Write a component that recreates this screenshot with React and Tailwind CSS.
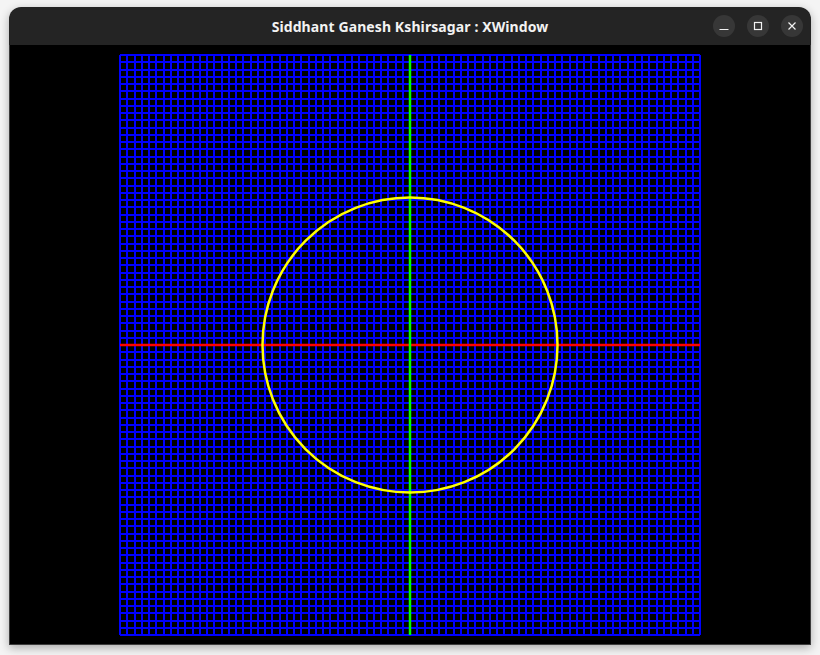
import React from "react";

const STEP = 7.25;
const lines = Array.from({ length: 81 }, (_, i) => 110 + i * STEP);

function TitleButton({ children }) {
  return (
    <div className="w-[22px] h-[22px] rounded-full bg-[#373737] flex items-center justify-center">
      <svg width="12" height="12" viewBox="0 0 12 12" fill="none" stroke="#f2f2f2" strokeWidth="1.2">
        {children}
      </svg>
    </div>
  );
}

export default function App() {
  return (
    <div className="w-[820px] h-[655px] bg-[#f4f4f4] pt-[7px] pl-[9px]">
      <div className="w-[802px] h-[638px] flex flex-col rounded-t-[12px] shadow-[0_3px_10px_rgba(0,0,0,0.3)] overflow-hidden">
        <div className="h-[38px] bg-[#242424] relative flex items-center justify-center">
          <span className="text-[14px] font-bold text-[#f2f2f2] font-['Noto_Sans',sans-serif] tracking-[0.1px]">
            Siddhant Ganesh Kshirsagar : XWindow
          </span>
          <div className="absolute right-[8px] top-[8px] flex gap-[12px]">
            <TitleButton>
              <line x1="1.5" y1="9.5" x2="10.5" y2="9.5" />
            </TitleButton>
            <TitleButton>
              <rect x="2.5" y="2.5" width="7" height="7" />
            </TitleButton>
            <TitleButton>
              <path d="M2.5 2.5 L9.5 9.5 M9.5 2.5 L2.5 9.5" />
            </TitleButton>
          </div>
        </div>
        <div className="h-[600px] bg-black border-x border-b border-[#3c3c3c]">
          <svg width="800" height="600" viewBox="0 0 800 600" className="block">
            <g stroke="#0000ff" strokeWidth="2" shapeRendering="crispEdges">
              {lines.map((p, i) => (
                <line key={"v" + i} x1={p} y1={10} x2={p} y2={590} />
              ))}
              {lines.map((p, i) => (
                <line key={"h" + i} x1={110} y1={10 + i * STEP} x2={690} y2={10 + i * STEP} />
              ))}
            </g>
            <line x1="110" y1="300" x2="690" y2="300" stroke="#ff0000" strokeWidth="2.5" />
            <line x1="400" y1="10" x2="400" y2="590" stroke="#00ff00" strokeWidth="2.5" />
            <circle cx="400" cy="300" r="147.5" fill="none" stroke="#ffff00" strokeWidth="2.5" />
          </svg>
        </div>
      </div>
    </div>
  );
}
